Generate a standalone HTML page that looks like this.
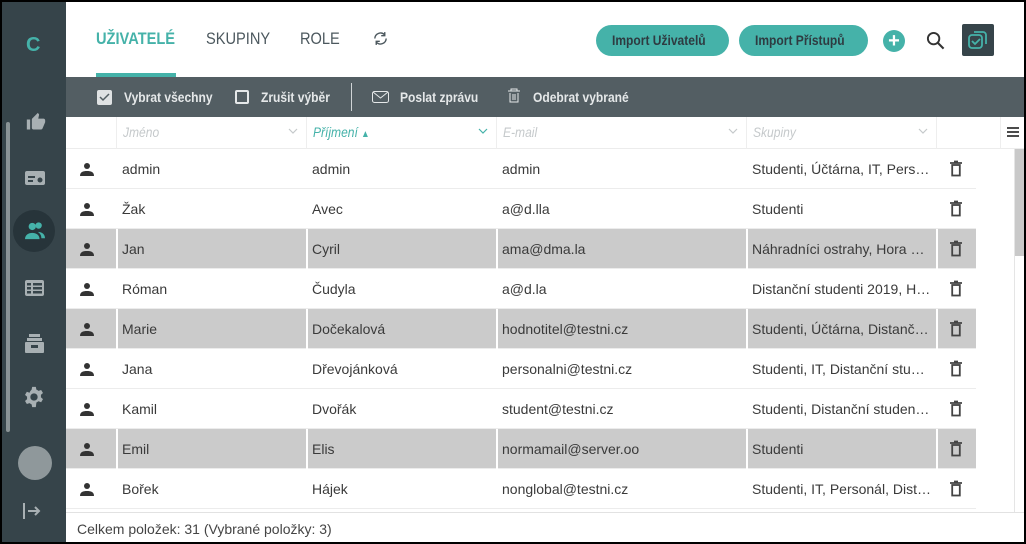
<!DOCTYPE html>
<html><head><meta charset="utf-8"><style>
*{box-sizing:border-box;margin:0;padding:0}
body{width:1026px;height:544px;background:#000;position:relative;overflow:hidden;font-family:"Liberation Sans",sans-serif}
.abs{position:absolute}
.nar{display:inline-block;transform:scaleX(.86);transform-origin:left center;white-space:nowrap}
#side{left:2px;top:2px;width:64px;height:540px;background:#36444a}
#main{left:66px;top:2px;width:958px;height:540px;background:#fff}
.tab{position:absolute;top:29px;font-size:17px;color:#4c585e;white-space:nowrap;transform:scaleX(.86);transform-origin:left center}
.btn{position:absolute;top:25px;height:31px;border-radius:16px;background:#45b2a9;color:#2e3b41;font-weight:bold;font-size:14px;line-height:31px;white-space:nowrap}
.btn span{position:absolute;top:0}
#tb{left:66px;top:77px;width:958px;height:40px;background:#535e63;color:#e5e8e9;font-size:14px;font-weight:bold}
#tb span{position:absolute;top:12px;transform:scaleX(.86);transform-origin:left center;white-space:nowrap}
.row{position:absolute;left:66px;width:910px;height:40px;border-bottom:1px solid #ececec;font-size:14px;color:#3a3a3a}
.row.sel{background:#cbcbcb}
.row div{position:absolute;top:0;height:40px;line-height:40px;white-space:nowrap;overflow:hidden}
.row.sel .c{box-shadow:inset 2px 0 0 #fff}
.hd{position:absolute;top:117px;height:32px;line-height:30px;font-size:14px;font-style:italic;color:#c5c9cb;border-bottom:1px solid #ececec;border-left:1px solid #eee}
.hd .t{display:inline-block;transform:scaleX(.86);transform-origin:left center}
.chev{position:absolute;top:11px}
</style></head><body>
<div id="side" class="abs">
 <div class="abs" style="left:24px;top:32px;color:#45b2a9;font-weight:bold;font-size:20px">C</div>
 <div class="abs" style="left:4px;top:120px;width:4px;height:310px;background:#8a9396;border-radius:2px"></div>
 <svg class="abs" style="left:24px;top:110px" width="20" height="20" viewBox="0 0 24 24"><path fill="#a8b0b3" d="M1 21h4V9H1v12zm22-11c0-1.1-.9-2-2-2h-6.3l1-4.6c0-.4-.1-.8-.4-1L14.2 1 7.6 7.6C7.2 8 7 8.5 7 9v10c0 1.1.9 2 2 2h9c.8 0 1.5-.5 1.8-1.2l3-7c.1-.3.2-.5.2-.8v-2z"/></svg>
 <svg class="abs" style="left:23px;top:167px" width="20" height="18" viewBox="0 0 20 18"><rect x="0" y="2" width="20" height="14" rx="2" fill="#a8b0b3"/><rect x="3" y="7" width="7" height="2" fill="#36444a"/><rect x="3" y="11" width="5" height="2" fill="#36444a"/><circle cx="15" cy="11" r="2.5" fill="#36444a"/></svg>
 <div class="abs" style="left:11px;top:208px;width:42px;height:42px;border-radius:50%;background:#27343a"></div>
 <svg class="abs" style="left:22px;top:219px" width="22" height="20" viewBox="0 0 24 22"><circle cx="9" cy="6" r="4" fill="#45b2a9"/><path d="M1 20c0-5 4-7 8-7s8 2 8 7z" fill="#45b2a9"/><circle cx="16" cy="5" r="3.5" fill="#45b2a9"/><path d="M15 12c4 0 8 2 8 7h-4c0-3-1-5-4-7z" fill="#45b2a9"/></svg>
 <svg class="abs" style="left:23px;top:278px" width="19" height="16" viewBox="0 0 19 16"><rect width="19" height="16" rx="2" fill="#a8b0b3"/><rect x="2" y="3" width="4" height="2.5" fill="#36444a"/><rect x="8" y="3" width="9" height="2.5" fill="#36444a"/><rect x="2" y="7" width="4" height="2.5" fill="#36444a"/><rect x="8" y="7" width="9" height="2.5" fill="#36444a"/><rect x="2" y="11" width="4" height="2.5" fill="#36444a"/><rect x="8" y="11" width="9" height="2.5" fill="#36444a"/></svg>
 <svg class="abs" style="left:23px;top:331px" width="19" height="20" viewBox="0 0 19 20"><rect x="4" y="1" width="11" height="3" fill="#a8b0b3"/><rect x="2" y="5" width="15" height="3" fill="#a8b0b3"/><rect x="0" y="9" width="19" height="11" rx="1" fill="#a8b0b3"/><rect x="6" y="12" width="7" height="3" fill="#36444a"/></svg>
 <svg class="abs" style="left:21px;top:384px" width="22" height="22" viewBox="0 0 24 24"><path fill="#a8b0b3" d="M10 1h4l.6 3a8 8 0 012.3 1.3l2.9-1 2 3.4-2.3 2a8 8 0 010 2.6l2.3 2-2 3.4-2.9-1a8 8 0 01-2.3 1.3L14 23h-4l-.6-3a8 8 0 01-2.3-1.3l-2.9 1-2-3.4 2.3-2a8 8 0 010-2.6l-2.3-2 2-3.4 2.9 1A8 8 0 019.4 4zM12 8a4 4 0 100 8 4 4 0 000-8z"/></svg>
 <div class="abs" style="left:16px;top:444px;width:34px;height:34px;border-radius:50%;background:#8f989b"></div>
 <svg class="abs" style="left:20px;top:500px" width="20" height="18" viewBox="0 0 20 18"><path d="M2 1v16M6 9h11M13 5l4 4-4 4" stroke="#a8b0b3" stroke-width="2" fill="none"/></svg>
</div>
<div id="main" class="abs"></div>
<div class="tab" style="left:96px;color:#45b2a9;font-weight:bold">UŽIVATELÉ</div>
<div class="abs" style="left:96px;top:73px;width:80px;height:4px;background:#45b2a9"></div>
<div class="tab" style="left:206px">SKUPINY</div>
<div class="tab" style="left:300px">ROLE</div>
<svg class="abs" style="left:372px;top:30px" width="17" height="17" viewBox="0 0 24 24"><path d="M4 12a8 8 0 0114-5M20 12a8 8 0 01-14 5" stroke="#4c585e" stroke-width="2" fill="none"/><path d="M18 3v5h-5M6 21v-5h5" stroke="#4c585e" stroke-width="2" fill="none"/></svg>
<div class="btn" style="left:596px;width:133px"><span class="nar" style="left:16px">Import Uživatelů</span></div>
<div class="btn" style="left:739px;width:129px"><span class="nar" style="left:16px">Import Přístupů</span></div>
<div class="abs" style="left:883px;top:30px;width:22px;height:22px;border-radius:50%;background:#45b2a9;color:#fff;font-weight:bold;font-size:20px;line-height:22px;text-align:center">+</div>
<svg class="abs" style="left:926px;top:31px" width="19" height="19" viewBox="0 0 20 20"><circle cx="8" cy="8" r="6" stroke="#333" stroke-width="2" fill="none"/><path d="M12.5 12.5l6 6" stroke="#333" stroke-width="2.2"/></svg>
<div class="abs" style="left:962px;top:24px;width:32px;height:32px;background:#36444a;border-radius:2px"></div>
<svg class="abs" style="left:967px;top:29px" width="22" height="22" viewBox="0 0 22 22"><rect x="2" y="6" width="13" height="13" rx="3" stroke="#45b2a9" stroke-width="1.8" fill="none"/><path d="M7 3h9a3 3 0 013 3v9" stroke="#45b2a9" stroke-width="1.8" fill="none"/><path d="M5 12l3 3 5-5" stroke="#45b2a9" stroke-width="1.8" fill="none"/></svg>
<div id="tb" class="abs">
 <div class="abs" style="left:31px;top:13px;width:15px;height:15px;background:#dfe2e3;border-radius:2px"></div>
 <svg class="abs" style="left:33px;top:15px" width="11" height="11"><path d="M1 5l3 3 6-6" stroke="#535e63" stroke-width="1.5" fill="none"/></svg>
 <span style="left:58px">Vybrat všechny</span>
 <div class="abs" style="left:169px;top:13px;width:14px;height:14px;border:2px solid #e5e8e9;border-radius:2px"></div>
 <span style="left:195px">Zrušit výběr</span>
 <div class="abs" style="left:285px;top:6px;width:1px;height:28px;background:#d0d4d6"></div>
 <svg class="abs" style="left:306px;top:14px" width="17" height="12"><rect x=".5" y=".5" width="16" height="11" rx="2" stroke="#e5e8e9" fill="none"/><path d="M1 1l7.5 6 7.5-6" stroke="#e5e8e9" fill="none"/></svg>
 <span style="left:334px">Poslat zprávu</span>
 <svg class="abs" style="left:441px;top:11px" width="14" height="16"><path d="M1 3h12M4 3V1h6v2M3 5v9h8V5M6 6v6M8 6v6" stroke="#e5e8e9" fill="none"/></svg>
 <span style="left:467px">Odebrat vybrané</span>
</div>
<svg width="0" height="0" style="position:absolute"><defs><path id="cv" d="M1 1l4 4 4-4" stroke="#c5c9cb" stroke-width="1.2" fill="none"/></defs></svg>
<div class="hd" style="left:116px;width:190px;padding-left:6px"><span class="t">Jméno</span><svg class="chev" style="left:171px" width="10" height="7"><use href="#cv"/></svg></div>
<div class="hd" style="left:306px;width:190px;padding-left:6px;color:#45b2a9"><span class="t">Příjmení <span style="font-style:normal;font-size:10px">▲</span></span><svg class="chev" style="left:171px" width="10" height="7"><path d="M1 1l4 4 4-4" stroke="#45b2a9" stroke-width="1.2" fill="none"/></svg></div>
<div class="hd" style="left:496px;width:250px;padding-left:6px"><span class="t">E-mail</span><svg class="chev" style="left:231px" width="10" height="7"><use href="#cv"/></svg></div>
<div class="hd" style="left:746px;width:190px;padding-left:6px"><span class="t">Skupiny</span><svg class="chev" style="left:171px" width="10" height="7"><use href="#cv"/></svg></div>
<div class="hd" style="left:936px;width:64px"></div>
<div class="hd" style="left:66px;width:50px;border-left:none"></div>
<div class="hd" style="left:1000px;width:24px">
<svg class="abs" style="left:6px;top:10px" width="12" height="10"><path d="M0 1h12M0 5h12M0 9h12" stroke="#333" stroke-width="1.8"/></svg></div>
<div class="abs" style="left:1014px;top:149px;width:1px;height:363px;background:#e5e5e5"></div>
<div class="abs" style="left:1015px;top:149px;width:9px;height:107px;background:#c9c9c9"></div>
<div id="rows"></div>
<div class="abs" style="left:66px;top:512px;width:958px;height:1px;background:#e2e2e2"></div>
<div class="abs" style="left:77px;top:521px;font-size:14px;color:#444">Celkem položek: 31 (Vybrané položky: 3)</div>
<script>
var d=[["admin","admin","admin","Studenti, Účtárna, IT, Pers…",0],["Žak","Avec","a@d.lla","Studenti",0],["Jan","Cyril","ama@dma.la","Náhradníci ostrahy, Hora …",1],["Róman","Čudyla","a@d.la","Distanční studenti 2019, H…",0],["Marie","Dočekalová","hodnotitel@testni.cz","Studenti, Účtárna, Distanč…",1],["Jana","Dřevojánková","personalni@testni.cz","Studenti, IT, Distanční stu…",0],["Kamil","Dvořák","student@testni.cz","Studenti, Distanční studen…",0],["Emil","Elis","normamail@server.oo","Studenti",1],["Bořek","Hájek","nonglobal@testni.cz","Studenti, IT, Personál, Dist…",0]];
var h="",ic='<svg width="14" height="14" viewBox="0 0 14 14"><circle cx="7" cy="4" r="3" fill="#333"/><path d="M0 14c0-4 3-5 7-5s7 1 7 5z" fill="#333"/></svg>',tr='<svg width="14" height="17" viewBox="0 0 14 17"><path d="M1 3h12M5 1.5h4" stroke="#444" stroke-width="1.8"/><rect x="3.2" y="5" width="7.6" height="10.5" stroke="#444" stroke-width="1.8" fill="none"/></svg>';
d.forEach(function(r,i){h+='<div class="row'+(r[4]?' sel':'')+'" style="top:'+(149+i*40)+'px"><div style="left:14px;top:13px;height:14px;line-height:0">'+ic+'</div><div class="c" style="left:50px;width:190px;padding-left:6px">'+r[0]+'</div><div class="c" style="left:240px;width:190px;padding-left:6px">'+r[1]+'</div><div class="c" style="left:430px;width:250px;padding-left:6px">'+r[2]+'</div><div class="c" style="left:680px;width:190px;padding-left:6px">'+r[3]+'</div><div class="c" style="left:870px;width:40px;padding:11px 0 0 13px;line-height:0">'+tr+'</div></div>'});
document.getElementById("rows").innerHTML=h;
</script>
</body></html>
